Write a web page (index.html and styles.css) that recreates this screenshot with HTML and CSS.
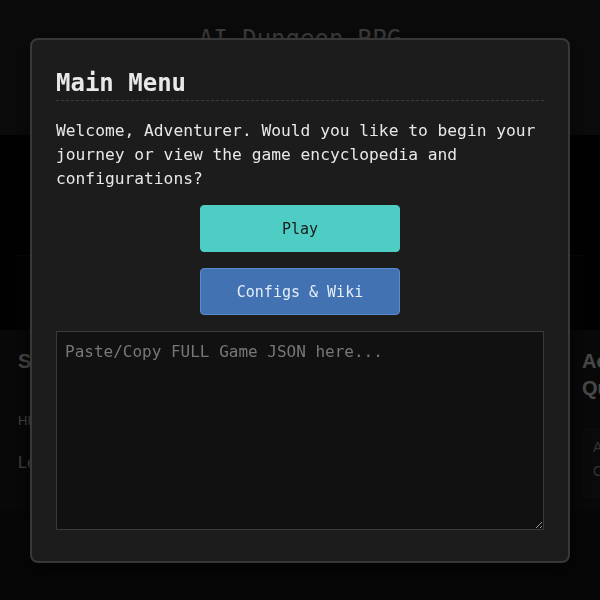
FILE: index.html
```html
<!DOCTYPE html>
<html lang="en">
<head>
    <meta charset="UTF-8">
    <meta name="viewport" content="width=device-width, initial-scale=1.0">
    <title>AI Dungeon RPG</title>
    <link rel="stylesheet" href="styles.css">
</head>
<body>
    <header class="site-header">
        <h1>AI Dungeon RPG</h1>
    </header>

    <section class="story-panel">
        <div class="story-log"></div>
        <div class="action-bar"></div>
    </section>

    <main class="columns">
        <aside class="side-panel">
            <h2>Stats</h2>
            <p class="stat small">HP: 100 / 100</p>
            <p class="stat">Level 1</p>
        </aside>
        <div class="center-panel"></div>
        <aside class="side-panel right">
            <h2>Active Quests</h2>
            <div class="quest-card">
                <p class="quest-title">A Fresh Start</p>
                <p class="quest-desc">Continue your journey</p>
            </div>
        </aside>
    </main>

    <div class="input-strip"></div>

    <!-- Main menu modal, shown on load -->
    <div class="overlay">
        <div class="modal">
            <h2 class="modal-title">Main Menu</h2>
            <p class="modal-text">Welcome, Adventurer. Would you like to begin your journey or view the game encyclopedia and configurations?</p>
            <div class="modal-actions">
                <button class="btn btn-play">Play</button>
                <button class="btn btn-config">Configs &amp; Wiki</button>
            </div>
            <textarea class="json-box" placeholder="Paste/Copy FULL Game JSON here..."></textarea>
        </div>
    </div>
</body>
</html>
```

FILE: styles.css
```css
body {
    margin: 0;
    background-color: #151515;
    color: #eee;
    font-family: "Liberation Sans", Arial, sans-serif;
    overflow: hidden;
    height: 600px;
}

.site-header {
    background-color: #252525;
    height: 135px;
    text-align: center;
}

.site-header h1 {
    margin: 0;
    padding-top: 25px;
    font-family: "DejaVu Sans Mono", monospace;
    font-weight: normal;
    font-size: 24px;
    color: #c8c8c8;
}

.story-panel {
    height: 195px;
    background-color: #060606;
    display: flex;
    flex-direction: column;
}

.story-log {
    flex: 1;
}

.action-bar {
    height: 74px;
    margin: 0 15px;
    border-top: 1px solid #1e1e1e;
    background-color: #0a0a0a;
}

.columns {
    display: grid;
    grid-template-columns: 190px 380px 30px;
    height: 180px;
}

.side-panel {
    background-color: #1c1c1c;
    padding: 18px;
    overflow: hidden;
}

.side-panel.right {
    padding: 18px 0 18px 12px;
}

.side-panel h2 {
    margin: 0 0 38px;
    font-size: 20px;
    line-height: 27px;
    color: #eee;
    width: 120px;
}

.side-panel.right h2 {
    margin-bottom: 26px;
}

.stat {
    margin: 0 0 18px;
    font-size: 16px;
    color: #ddd;
}

.stat.small {
    font-size: 13px;
    margin-bottom: 26px;
}

.quest-card {
    border: 1px solid #2c2c2c;
    background-color: #222;
    border-radius: 6px;
    padding: 10px;
    width: 120px;
}

.quest-card p {
    margin: 0 0 8px;
    font-size: 14px;
    color: #aaa;
    white-space: nowrap;
}

.input-strip {
    height: 40px;
    width: 460px;
    margin: 10px 0 0 20px;
    background-color: #1a1a1a;
}

/* modal */

.overlay {
    position: fixed;
    inset: 0;
    background-color: rgba(0, 0, 0, 0.7);
    display: flex;
    justify-content: center;
    align-items: flex-start;
    padding-top: 38px;
}

.modal {
    width: 488px;
    padding: 24px 24px 27px;
    background-color: #1c1c1c;
    border: 2px solid #383838;
    border-radius: 8px;
    box-shadow: 0 6px 20px rgba(0, 0, 0, 0.6);
    font-family: "DejaVu Sans Mono", monospace;
    color: #e8e8e8;
}

.modal-title {
    margin: 4px 0 0;
    padding-bottom: 2px;
    font-size: 24px;
    line-height: 30px;
    font-weight: bold;
    border-bottom: 1px dashed #3c3c3c;
}

.modal-text {
    margin: 18px 0 14px;
    font-size: 16.25px;
    line-height: 24px;
}

.modal-actions {
    display: flex;
    flex-direction: column;
    align-items: center;
    gap: 16px;
    margin-bottom: 16px;
}

.btn {
    width: 200px;
    height: 47px;
    border-radius: 4px;
    font-family: "DejaVu Sans Mono", monospace;
    font-size: 15px;
    cursor: pointer;
}

.btn-play {
    background-color: #4ecdc4;
    border: 1px solid #4ecdc4;
    color: #1a1a1a;
}

.btn-config {
    background-color: #4272b2;
    border: 1px solid #5a8ad0;
    color: #e6eefa;
}

.json-box {
    width: 488px;
    height: 199px;
    box-sizing: border-box;
    padding: 8px;
    background-color: #111;
    border: 1px solid #3a3a3a;
    color: #ddd;
    font-family: "DejaVu Sans Mono", monospace;
    font-size: 16px;
    line-height: 24px;
    resize: vertical;
}

.json-box::placeholder {
    color: #777;
}
```
